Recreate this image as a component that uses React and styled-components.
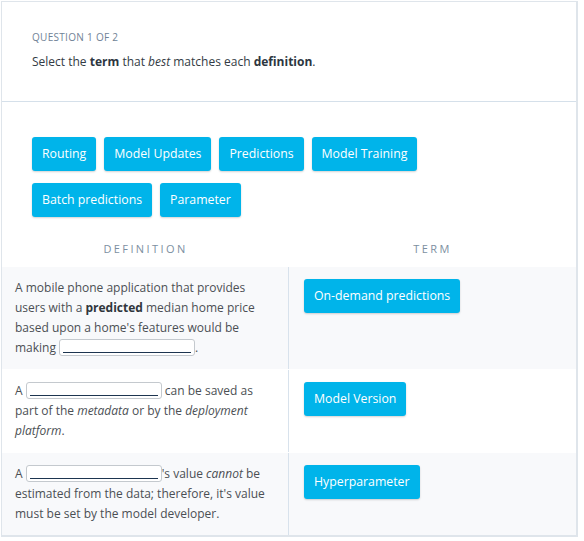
import React from 'react';
import styled, { createGlobalStyle } from 'styled-components';

const GlobalStyle = createGlobalStyle`
  body {
    margin: 0;
    background: #ffffff;
    font-family: 'Open Sans', 'Liberation Sans', sans-serif;
  }
`;

const choices = ['Routing', 'Model Updates', 'Predictions', 'Model Training', 'Batch predictions', 'Parameter'];

const rows = [
  {
    term: 'On-demand predictions',
    shade: true,
    def: (
      <>
        A mobile phone application that provides users with a <b>predicted</b> median home price based upon a
        home's features would be making <Blank />.
      </>
    ),
  },
  {
    term: 'Model Version',
    shade: false,
    def: (
      <>
        A <Blank /> can be saved as part of the <i>metadata</i> or by the <i>deployment platform</i>.
      </>
    ),
  },
  {
    term: 'Hyperparameter',
    shade: true,
    def: (
      <>
        A <Blank />'s value <i>cannot</i> be estimated from the data; therefore, it's value must be set by the model
        developer.
      </>
    ),
  },
];

function Blank() {
  return (
    <StBlank>
      <StBlankLine />
    </StBlank>
  );
}

export default function App() {
  return (
    <>
      <GlobalStyle />
      <StPage>
        <StCard>
          <StHeader>
            <StCount>Question 1 of 2</StCount>
            <StPrompt>
              Select the <b>term</b> that <i>best</i> matches each <b>definition</b>.
            </StPrompt>
          </StHeader>

          <StChoices>
            {choices.map((c) => (
              <StChip key={c}>{c}</StChip>
            ))}
          </StChoices>

          <StColHeads>
            <StColHead>Definition</StColHead>
            <StColHead>Term</StColHead>
          </StColHeads>

          <StTable>
            {rows.map((r, i) => (
              <StRow key={i} shade={r.shade ? 1 : 0}>
                <StDefCell>{r.def}</StDefCell>
                <StTermCell>
                  <StChip>{r.term}</StChip>
                </StTermCell>
              </StRow>
            ))}
          </StTable>
        </StCard>
      </StPage>
    </>
  );
}

const StPage = styled.div`
  padding: 1px 0 0 1px;
  width: 584px;
  box-sizing: border-box;
`;

const StCard = styled.div`
  width: 577px;
  box-sizing: border-box;
  border: 1px solid #dfe5eb;
  border-right-width: 2px;
  border-bottom-width: 2px;
  background: #ffffff;
`;

const StHeader = styled.div`
  height: 100px;
  box-sizing: border-box;
  padding: 28px 30px 0;
  border-bottom: 1px solid #d5e0ea;
`;

const StCount = styled.div`
  font-size: 10px;
  line-height: 14px;
  letter-spacing: 0.3px;
  text-transform: uppercase;
  color: #6f8296;
`;

const StPrompt = styled.div`
  margin-top: 8px;
  font-size: 12px;
  line-height: 20px;
  color: #333b44;

  b {
    font-weight: 700;
    color: #2d3640;
  }
`;

const StChoices = styled.div`
  display: flex;
  flex-wrap: wrap;
  gap: 12px 8px;
  padding: 35px 150px 0 30px;
`;

const StChip = styled.div`
  display: inline-block;
  padding: 7px 10px;
  font-size: 12.3px;
  line-height: 20px;
  color: #ffffff;
  background: #00b4ea;
  border-radius: 3px;
  box-shadow: 0 1px 2px rgba(0, 0, 0, 0.18);
  white-space: nowrap;
`;

const StColHeads = styled.div`
  display: grid;
  grid-template-columns: 1fr 1fr;
  padding: 24px 0 10px;
`;

const StColHead = styled.div`
  text-align: center;
  font-size: 11px;
  line-height: 16px;
  letter-spacing: 2.4px;
  text-transform: uppercase;
  color: #7d8fa1;
`;

const StTable = styled.div`
  display: flex;
  flex-direction: column;
`;

const StRow = styled.div`
  display: grid;
  grid-template-columns: 287px 1fr;
  background: ${(props) => (props.shade ? '#f8f9fb' : '#ffffff')};
  border-bottom: 1px solid #ffffff;

  &:last-child {
    border-bottom: none;
  }
`;

const StDefCell = styled.div`
  padding: 11px 16px 11px 13px;
  font-size: 12px;
  line-height: 20px;
  color: #4b4f54;
  border-right: 1px solid #d8e2ec;

  b {
    font-weight: 700;
    color: #2f353b;
  }
`;

const StTermCell = styled.div`
  padding: 12px 15px;
  display: flex;
  align-items: flex-start;
`;

const StBlank = styled.span`
  display: inline-block;
  position: relative;
  width: 134px;
  height: 15px;
  vertical-align: -4px;
  border: 1px solid #c4c9ce;
  border-radius: 3px;
  background: #ffffff;
`;

const StBlankLine = styled.span`
  position: absolute;
  left: 3px;
  right: 3px;
  bottom: 2px;
  border-bottom: 1px solid #1d3550;
`;
